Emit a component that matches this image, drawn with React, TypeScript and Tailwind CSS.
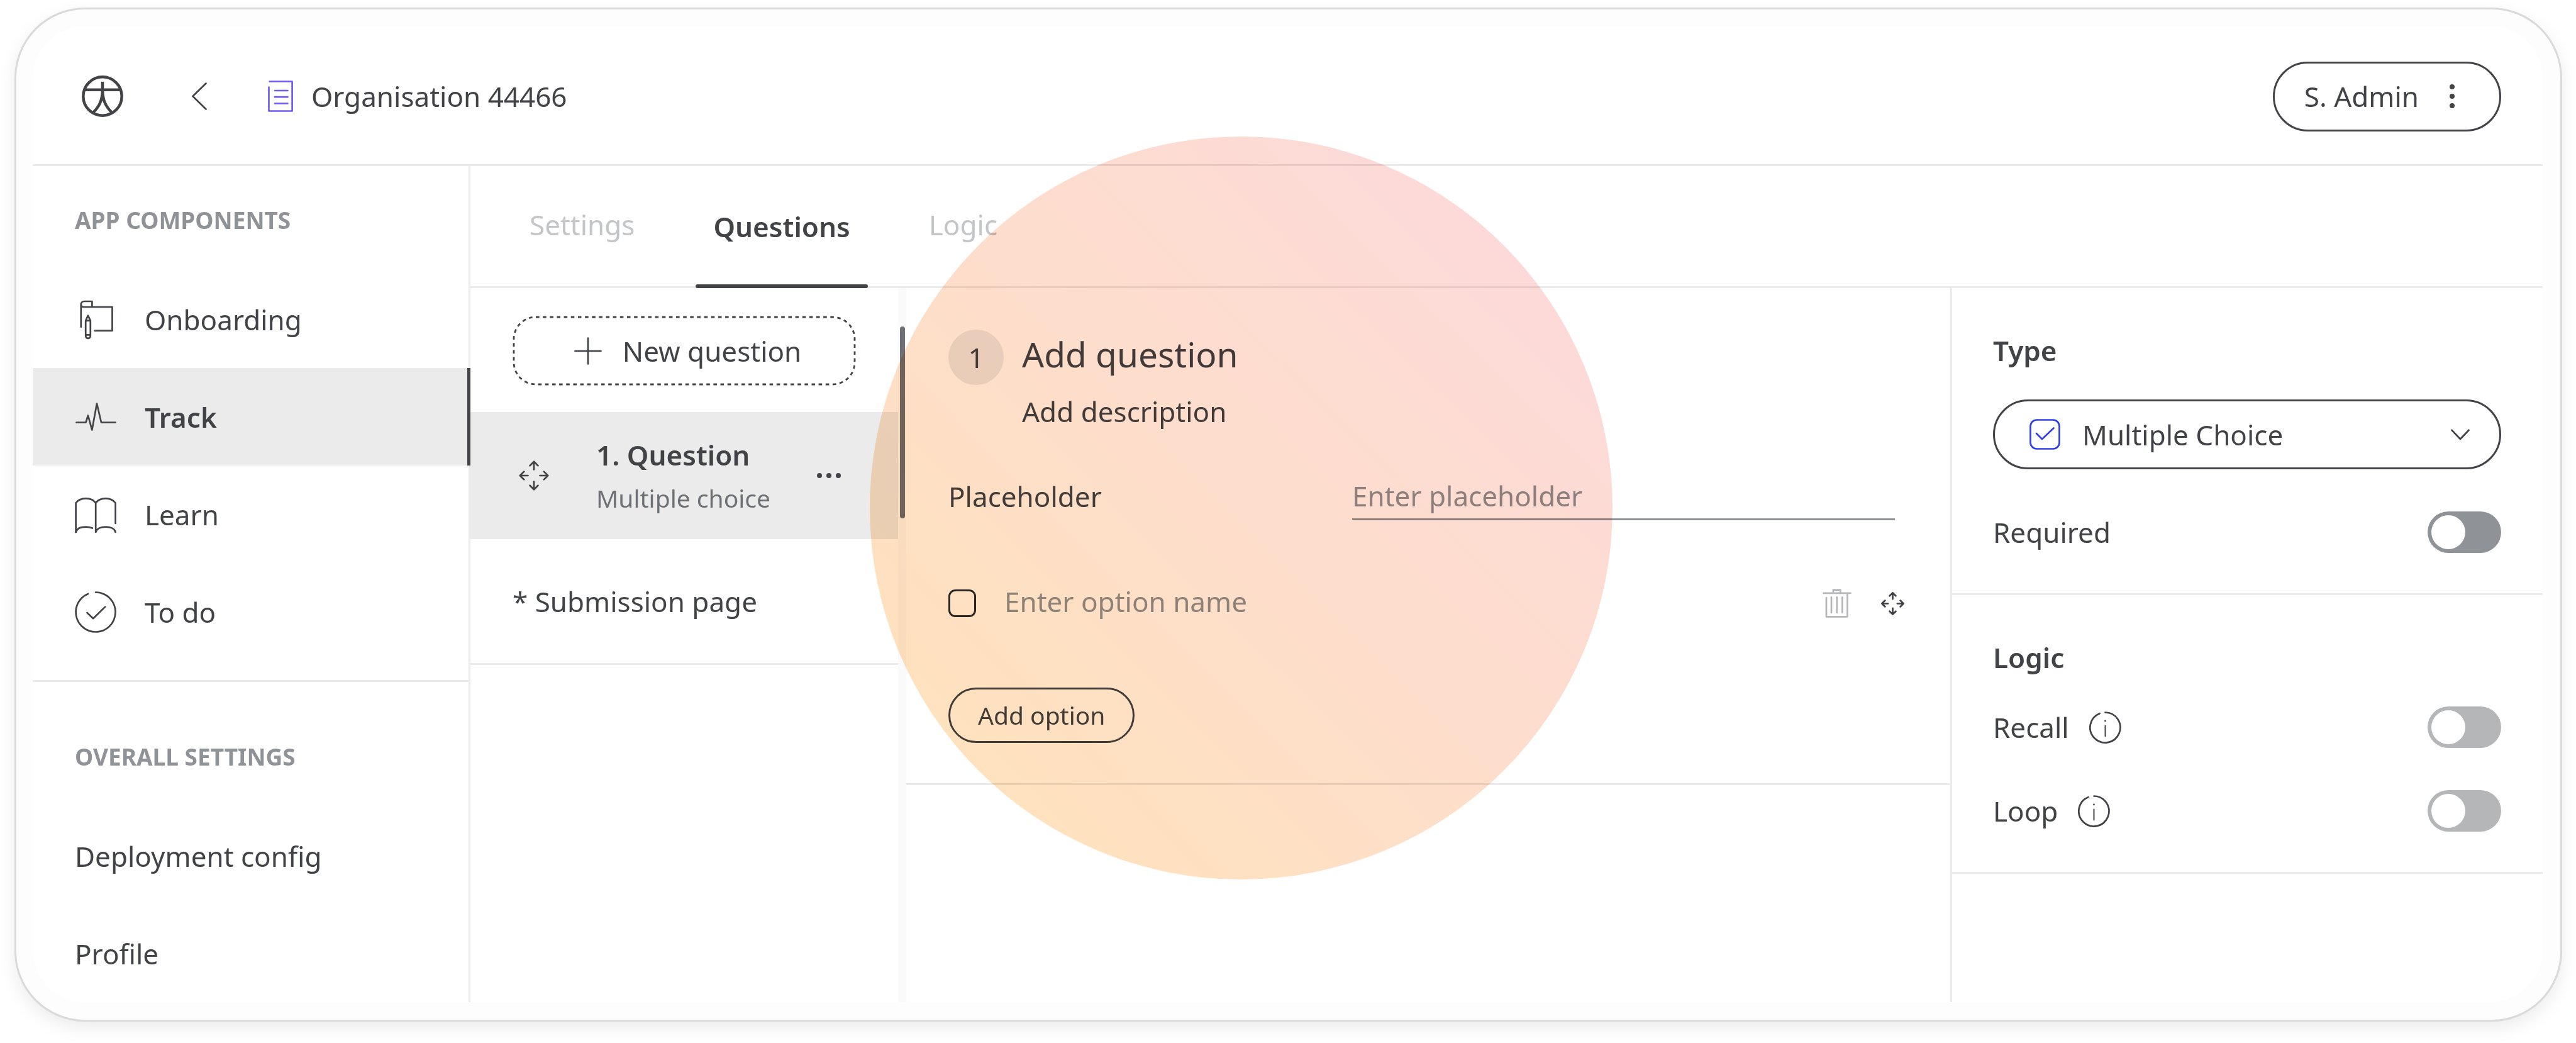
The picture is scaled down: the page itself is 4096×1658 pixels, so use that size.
import React from "react";

type IconProps = { className?: string };

const stroke = {
  fill: "none",
  stroke: "currentColor",
  strokeWidth: 2.7,
  strokeLinecap: "round" as const,
  strokeLinejoin: "round" as const,
  "aria-hidden": true,
};

const LogoIcon = () => (
  <svg {...stroke} strokeWidth={4.5} strokeLinecap="butt" viewBox="0 0 66 66" className="size-[66px]">
    <circle cx="33" cy="33" r="30.7" />
    <path d="M5 22.8H61M33 10V28M33 22C33 40 27.5 49.5 18.5 58.5M33 22C33 40 38.5 49.5 47.5 58.5" />
  </svg>
);

const BackIcon = () => (
  <svg {...stroke} viewBox="0 0 24 44" className="h-[44px] w-[24px]">
    <path d="M22.5 1.5L1.5 22L22.5 42.5" />
  </svg>
);

const DocumentIcon = () => (
  <svg {...stroke} viewBox="0 0 40 50" className="h-[50px] w-[40px] text-[#7359f6]">
    <path d="M2.6 1.5H38.6V48.5H1.5V10.5M11 16H31.5M11 26.2H31.5M11 36.5H31.5" />
  </svg>
);

const OnboardingIcon = () => (
  <svg {...stroke} viewBox="0 0 66 66" className="size-[66px]">
    <path d="M9.8 44.7V9C9.8 6 12 4 15 4H27.4V13M9.8 9C9.8 11.5 11.5 13 14.5 13H59.5V50.7H31.8" />
    <path d="M17.2 34.7L20.9 26.6L24.8 34.7V59a3.8 3.8 0 0 1-7.6 0ZM17.2 34.7H24.8M17.2 57.3H24.8" />
  </svg>
);

const TrackIcon = () => (
  <svg {...stroke} viewBox="0 0 66 66" className="size-[66px]">
    <path d="M2.5 41.5H17.5L21 30.5L27.3 53.5L35 11.5L42 41.5H64.5" />
  </svg>
);

const LearnIcon = () => (
  <svg {...stroke} viewBox="0 0 66 66" className="size-[66px]">
    <path d="M1.6 61V14.5C5 9.5 11 7.3 17.5 7.3S30 9.5 33.2 14.5C36.5 9.5 42.5 7.3 49 7.3S61 9.5 64.6 14.5V47" />
    <path d="M1.6 61C3 55.5 9 52.6 17.5 52.6C21 52.6 25 53.2 27.8 54.5M33.2 14.5V61C34.6 55.5 41 52.6 49 52.6S63.5 55.5 64.6 61" />
  </svg>
);

const TodoIcon = () => (
  <svg {...stroke} viewBox="0 0 66 66" className="size-[66px]">
    <path d="M33 1.5A31.5 31.5 0 1 1 21 3.9M19.5 34L29.2 43.2L48.2 24.6" />
  </svg>
);

const PlusIcon = () => (
  <svg {...stroke} viewBox="0 0 66 66" className="size-[66px]">
    <path d="M33 12.5V53.5M12.5 33H53.5" />
  </svg>
);

const DashedOutline = () => (
  <svg
    fill="none"
    stroke="currentColor"
    strokeWidth={2.8}
    strokeDasharray="5.6 5.55"
    aria-hidden
    className="pointer-events-none absolute inset-[2px] h-[107px] w-[calc(100%-4px)] overflow-visible"
  >
    <rect width="100%" height="100%" rx="35" />
  </svg>
);

const MoveIcon = ({ className, width = 2.7 }: IconProps & { width?: number }) => (
  <svg {...stroke} strokeWidth={width} viewBox="0 0 48 48" className={className}>
    <path d="M24 1.8V14.5M17.6 8.2L24 1.8L30.4 8.2" />
    <path d="M24 46.2V33.5M17.6 39.8L24 46.2L30.4 39.8" />
    <path d="M1.8 24H14.5M8.2 17.6L1.8 24L8.2 30.4" />
    <path d="M46.2 24H33.5M39.8 17.6L46.2 24L39.8 30.4" />
  </svg>
);

const TrashIcon = () => (
  <svg {...stroke} viewBox="0 0 46 46" className="size-[46px] text-[#b5b6b8]">
    <path d="M1.5 6.9H44.5M16.9 6.9V1.6H28.4V6.9M6 14.3V44.3H39.5V6.9M14 13.4V37.9M22.8 13.4V37.9M31.4 13.4V37.9" />
  </svg>
);

const InfoIcon = () => (
  <svg {...stroke} viewBox="0 0 51 51" className="size-[51px]">
    <path d="M25.5 1.5A24 24 0 1 1 16.5 3.2" />
    <path d="M25.5 22.5V39.5" strokeWidth={2} />
    <circle cx="25.5" cy="15" r="1.4" fill="currentColor" stroke="none" />
  </svg>
);

const TickBoxIcon = ({ className }: IconProps) => (
  <svg {...stroke} viewBox="0 0 49 49" className={className}>
    <rect x="1.5" y="1.5" width="46" height="46" rx="10" />
    <path d="M11 23L20 32L38.5 14.5" />
  </svg>
);

const ChevronDownIcon = ({ className }: IconProps) => (
  <svg {...stroke} viewBox="0 0 30 18" className={className}>
    <path d="M1.5 1.8L15 16L28.5 1.8" />
  </svg>
);

const components = [
  { label: "Onboarding", icon: <OnboardingIcon />, active: false },
  { label: "Track", icon: <TrackIcon />, active: true },
  { label: "Learn", icon: <LearnIcon />, active: false },
  { label: "To do", icon: <TodoIcon />, active: false },
];

function Sidebar() {
  return (
    <nav className="w-[696px] shrink-0 border-r-[3px] border-[#ebebeb]">
      <h2 className="px-[67px] pt-[62px] pb-[56px] text-[37px] leading-[48px] font-bold text-[#8f9398]">
        APP COMPONENTS
      </h2>
      <ul className="border-b-[3px] border-[#ebebeb] pb-[31px]">
        {components.map((item) => (
          <li key={item.label} className={item.active ? "-mr-[3px]" : ""}>
            <a
              href="#"
              className={
                item.active
                  ? "flex h-[155px] items-center gap-[45px] border-r-[5px] border-[#424347] bg-[#ebebeb] pl-[67px] font-semibold"
                  : "flex h-[155px] items-center gap-[45px] pl-[67px]"
              }
            >
              {item.icon}
              {item.label}
            </a>
          </li>
        ))}
      </ul>
      <h2 className="px-[67px] pt-[95px] pb-[56px] text-[37px] leading-[48px] font-bold text-[#8f9398]">
        OVERALL SETTINGS
      </h2>
      <ul>
        {["Deployment config", "Profile"].map((label) => (
          <li key={label}>
            <a href="#" className="flex h-[155px] items-center pl-[67px]">
              {label}
            </a>
          </li>
        ))}
      </ul>
    </nav>
  );
}

function QuestionList() {
  return (
    <section className="flex w-[693px] shrink-0">
      <div className="flex-1">
        <div className="px-[67px] pt-[44px] pb-[42px]">
          <button className="relative flex h-[111px] w-full items-center justify-center gap-[22px]">
            <DashedOutline />
            <PlusIcon />
            New question
          </button>
        </div>
        <div className="flex h-[202px] items-center bg-[#ebebeb] pr-[91px] pl-[77px]">
          <MoveIcon className="size-[48px]" />
          <div className="ml-[75px] flex-1">
            <p className="leading-[72px] font-semibold">1. Question</p>
            <p className="text-[39px] leading-[66px] text-[#6d7175]">Multiple choice</p>
          </div>
          <button aria-label="Question actions" className="flex gap-[7px]">
            <span className="size-[8px] rounded-full bg-[#424347]" />
            <span className="size-[8px] rounded-full bg-[#424347]" />
            <span className="size-[8px] rounded-full bg-[#424347]" />
          </button>
        </div>
        <a href="#" className="flex h-[200px] items-center border-b-[3px] border-[#ebebeb] pl-[67px]">
          * Submission page
        </a>
      </div>
      <div className="flex w-[13px] justify-center bg-[#fafafa] pt-[61px]">
        <div className="h-[305px] w-[8px] rounded-full bg-[#6d7175]" />
      </div>
    </section>
  );
}

function Editor() {
  return (
    <main className="min-w-0 flex-1">
      <div className="border-b-[3px] border-[#ebebeb] pt-[66px] pr-[73px] pb-[64px] pl-[67px]">
        <div className="flex items-start gap-[29px]">
          <span className="flex size-[88px] items-center justify-center rounded-full bg-[#ebebeb]">1</span>
          <div>
            <h1 className="text-[55px] leading-[78px]">Add question</h1>
            <p className="mt-[21px] leading-[62px]">Add description</p>
          </div>
        </div>
        <div className="mt-[66px] flex items-center pr-[15px]">
          <label htmlFor="placeholder" className="w-[642px]">
            Placeholder
          </label>
          <input
            id="placeholder"
            type="text"
            placeholder="Enter placeholder"
            className="h-[76px] min-w-0 flex-1 border-b-[3px] border-[#8f9398] bg-transparent placeholder:text-[#8f9398] placeholder:opacity-100"
          />
        </div>
        <div className="mt-[101px] flex h-[62px] items-center">
          <input
            type="checkbox"
            aria-label="Option selected"
            className="size-[44px] appearance-none rounded-[11px] border-[3px] border-[#29292b]"
          />
          <input
            type="text"
            aria-label="Option name"
            placeholder="Enter option name"
            className="ml-[45px] h-[66px] min-w-0 flex-1 bg-transparent pb-[6px] placeholder:text-[#8f9398] placeholder:opacity-100"
          />
          <button aria-label="Delete option">
            <TrashIcon />
          </button>
          <button aria-label="Move option" className="ml-[47px]">
            <MoveIcon className="size-[37px]" width={3.5} />
          </button>
        </div>
        <button className="mt-[103px] flex h-[88px] items-center rounded-full border-[3px] border-[#424347] px-[44px] text-[39px]">
          Add option
        </button>
      </div>
    </main>
  );
}

function ToggleRow({ label, info = false, muted = false }: { label: string; info?: boolean; muted?: boolean }) {
  const id = label.toLowerCase();
  return (
    <div className="flex h-[66px] items-center">
      <label htmlFor={id}>{label}</label>
      {info && (
        <button aria-label={"About " + id} className="ml-[32px]">
          <InfoIcon />
        </button>
      )}
      <input
        id={id}
        type="checkbox"
        role="switch"
        className={
          muted
            ? "ml-auto h-[66px] w-[117px] appearance-none rounded-full bg-[#b5b6b8] p-[6px] before:block before:size-[54px] before:rounded-full before:bg-white before:content-['']"
            : "ml-auto h-[66px] w-[117px] appearance-none rounded-full bg-[#8f9398] p-[6px] before:block before:size-[54px] before:rounded-full before:bg-white before:content-['']"
        }
      />
    </div>
  );
}

function Inspector() {
  return (
    <aside className="w-[942px] shrink-0 border-l-[3px] border-[#ebebeb]">
      <section className="border-b-[3px] border-[#ebebeb] pt-[68px] pr-[66px] pb-[64px] pl-[65px]">
        <label htmlFor="type" className="block leading-[62px] font-semibold">
          Type
        </label>
        <div className="relative mt-[47px] mb-[67px]">
          <select
            id="type"
            className="block h-[111px] w-full appearance-none rounded-full border-[3px] border-[#424347] bg-transparent pl-[139px]"
          >
            <option>Multiple Choice</option>
          </select>
          <TickBoxIcon className="pointer-events-none absolute top-[31px] left-[58px] size-[49px] text-[#2f3fe3]" />
          <ChevronDownIcon className="pointer-events-none absolute top-[47px] right-[50px] h-[18px] w-[30px]" />
        </div>
        <ToggleRow label="Required" />
      </section>
      <section className="border-b-[3px] border-[#ebebeb] pt-[68px] pr-[66px] pb-[64px] pl-[65px]">
        <h2 className="mb-[47px] leading-[62px] font-semibold">Logic</h2>
        <div className="flex flex-col gap-[67px]">
          <ToggleRow label="Recall" info muted />
          <ToggleRow label="Loop" info muted />
        </div>
      </section>
    </aside>
  );
}

export default function App() {
  return (
    <div className="min-h-screen bg-white pt-[12px] pr-[22px] pb-[33px] pl-[23px] font-['Noto_Sans',sans-serif] text-[44px] leading-[62px] text-[#424347]">
      <div className="rounded-[112px] border-[3px] border-[#d9dadb] bg-[#fdfdfd] pt-[27px] pr-[28px] pb-[28px] pl-[26px] shadow-[0_10px_28px_rgba(0,0,0,0.08)]">
        <div className="relative rounded-[84px] bg-white">
          <header className="flex h-[222px] items-center border-b-[3px] border-[#ebebeb] pt-[3px] pr-[66px] pl-[78px]">
            <a href="#" aria-label="Home">
              <LogoIcon />
            </a>
            <button aria-label="Back" className="ml-[109px]">
              <BackIcon />
            </button>
            <div className="ml-[97px] flex items-center gap-[29px]">
              <DocumentIcon />
              Organisation 44466
            </div>
            <button className="ml-auto flex h-[111px] items-center rounded-full border-[3px] border-[#424347] pr-[71px] pl-[47px]">
              S. Admin
              <span className="ml-[49px] flex flex-col gap-[7px]">
                <span className="size-[8px] rounded-full bg-[#424347]" />
                <span className="size-[8px] rounded-full bg-[#424347]" />
                <span className="size-[8px] rounded-full bg-[#424347]" />
              </span>
            </button>
          </header>
          <div className="flex">
            <Sidebar />
            <div className="flex min-w-0 flex-1 flex-col">
              <div className="flex h-[194px] items-stretch gap-[69px] border-b-[3px] border-[#ebebeb] pl-[66px]">
                <button className="px-[28px] pb-[6px] text-[#c4c5c7]">Settings</button>
                <button className="relative px-[28px] font-semibold">
                  Questions
                  <span className="absolute inset-x-0 -bottom-[3px] h-[6px] rounded-full bg-[#424347]" />
                </button>
                <button className="px-[28px] pb-[6px] text-[#c4c5c7]">Logic</button>
              </div>
              <div className="flex flex-1">
                <QuestionList />
                <Editor />
                <Inspector />
              </div>
            </div>
          </div>
          <div className="pointer-events-none absolute top-[175px] left-[1331px] size-[1181px] rounded-full bg-linear-to-tr from-[#ffe3b8] to-[#fcd8de] mix-blend-multiply" />
        </div>
      </div>
    </div>
  );
}
